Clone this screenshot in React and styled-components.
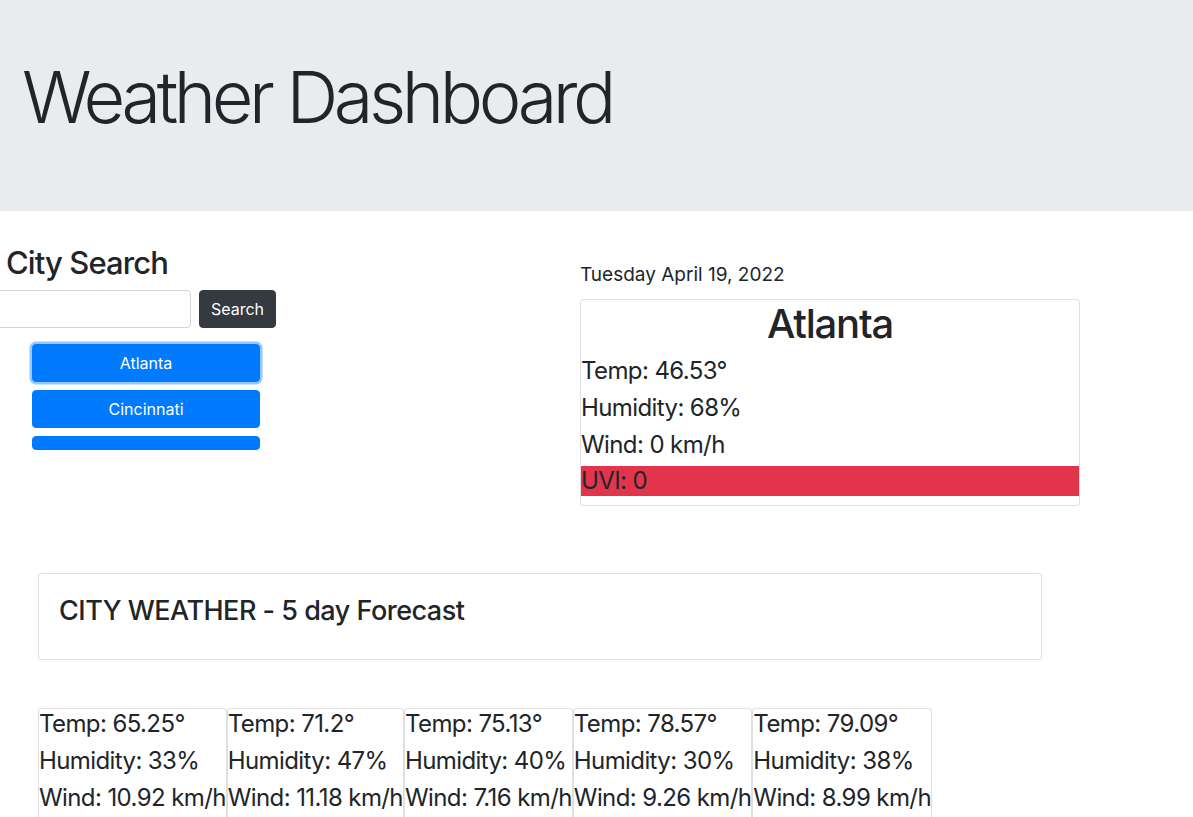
import React from 'react';
import styled, { createGlobalStyle } from 'styled-components';

const GlobalStyle = createGlobalStyle`
    body {
        margin: 0;
        font-family: Inter, "Noto Sans", sans-serif;
        color: #212529;
        background: #fff;
        overflow: hidden;
    }
    * { box-sizing: border-box; }
`;

const Header = styled.header`
    background-color: #e9ecef;
    height: 211px;
    padding: 54px 22px 0;
    margin-bottom: 33px;
`;

const Title = styled.h1`
    margin: 0;
    font-size: 72px;
    font-weight: 300;
    line-height: 1.2;
    letter-spacing: -4.4px;
`;

const Top = styled.section`
    display: flex;
    align-items: flex-start;
`;

const SearchCol = styled.div`
    width: 580px;
    padding-left: 6px;
`;

const SearchTitle = styled.h2`
    margin: 0 0 9px;
    font-size: 31px;
    font-weight: 500;
    line-height: 1.2;
    letter-spacing: -0.9px;
`;

const SearchRow = styled.form`
    display: flex;
    gap: 8px;
    margin-left: -18px;
`;

const Input = styled.input`
    width: 203px;
    height: 38px;
    border: 1px solid #ced4da;
    border-radius: 4px;
    font-size: 16px;
`;

const Button = styled.button`
    font-family: inherit;
    font-size: 16px;
    line-height: 24px;
    color: #fff;
    border: 1px solid transparent;
    border-radius: 4px;
    padding: 6px 12px;
    cursor: pointer;
`;

const SearchButton = styled(Button)`
    background-color: #343a40;
    border-color: #343a40;
    height: 38px;
    width: 77px;
    padding: 0;
`;

const CityList = styled.div`
    display: flex;
    flex-direction: column;
    gap: 8px;
    margin: 16px 0 0 26px;
    width: 228px;
`;

const CityButton = styled(Button)`
    background-color: #007bff;
    border-color: #007bff;
    width: 100%;
    min-height: 14px;
    box-shadow: ${({ $active }) => ($active ? '0 0 0 2.5px rgba(38, 143, 255, 0.5)' : 'none')};
`;

const CurrentCol = styled.div`
    padding-top: 19px;
`;

const DateText = styled.h5`
    margin: 0 0 12px;
    font-size: 19px;
    font-weight: 400;
    line-height: 24px;
`;

const Card = styled.div`
    border: 1px solid rgba(0, 0, 0, 0.125);
    border-radius: 4px;
    background: #fff;
    width: ${({ $width }) => $width || 'auto'};
`;

const CityName = styled.h1`
    margin: 0 0 8px;
    text-align: center;
    font-size: 40px;
    font-weight: 500;
    line-height: 48px;
    letter-spacing: -1.2px;
`;

const Stat = styled.h4`
    margin: 0 0 7px;
    padding-top: 1px;
    font-size: 24px;
    font-weight: 400;
    line-height: 1.2;
    white-space: nowrap;
    letter-spacing: -0.6px;
    background-color: ${({ $bg }) => $bg || 'transparent'};

    &:last-child {
        margin-bottom: 9px;
    }
`;

const ForecastSection = styled.section`
    margin: 67px 0 0 38px;
`;

const ForecastHeader = styled(Card)`
    width: 1004px;
    height: 87px;
    padding: 21px 20px 0;
`;

const ForecastTitle = styled.h3`
    margin: 0;
    font-size: 27px;
    font-weight: 500;
    line-height: 1.2;
    letter-spacing: -0.5px;
`;

const ForecastRow = styled.div`
    display: flex;
    margin-top: 48px;
`;

const cities = ['Atlanta', 'Cincinnati', ''];

const forecast = [
    { temp: '65.25', humidity: 33, wind: '10.92' },
    { temp: '71.2', humidity: 47, wind: '11.18' },
    { temp: '75.13', humidity: 40, wind: '7.16' },
    { temp: '78.57', humidity: 30, wind: '9.26' },
    { temp: '79.09', humidity: 38, wind: '8.99' }
];

const App = () => (
    <>
        <GlobalStyle />
        <Header>
            <Title>Weather Dashboard</Title>
        </Header>
        <Top>
            <SearchCol>
                <SearchTitle>City Search</SearchTitle>
                <SearchRow onSubmit={(e) => e.preventDefault()}>
                    <Input type="text" />
                    <SearchButton type="submit">Search</SearchButton>
                </SearchRow>
                <CityList>
                    {cities.map((city, i) => (
                        <CityButton key={i} $active={i === 0}>{city}</CityButton>
                    ))}
                </CityList>
            </SearchCol>
            <CurrentCol>
                <DateText>Tuesday April 19, 2022</DateText>
                <Card $width="500px">
                    <CityName>Atlanta</CityName>
                    <Stat>Temp: 46.53°</Stat>
                    <Stat>Humidity: 68%</Stat>
                    <Stat>Wind: 0 km/h</Stat>
                    <Stat $bg="#e2344a">UVI: 0</Stat>
                </Card>
            </CurrentCol>
        </Top>
        <ForecastSection>
            <ForecastHeader>
                <ForecastTitle>CITY WEATHER - 5 day Forecast</ForecastTitle>
            </ForecastHeader>
            <ForecastRow>
                {forecast.map((day) => (
                    <Card key={day.temp}>
                        <Stat>Temp: {day.temp}°</Stat>
                        <Stat>Humidity: {day.humidity}%</Stat>
                        <Stat>Wind: {day.wind} km/h</Stat>
                    </Card>
                ))}
            </ForecastRow>
        </ForecastSection>
    </>
);

export default App;
